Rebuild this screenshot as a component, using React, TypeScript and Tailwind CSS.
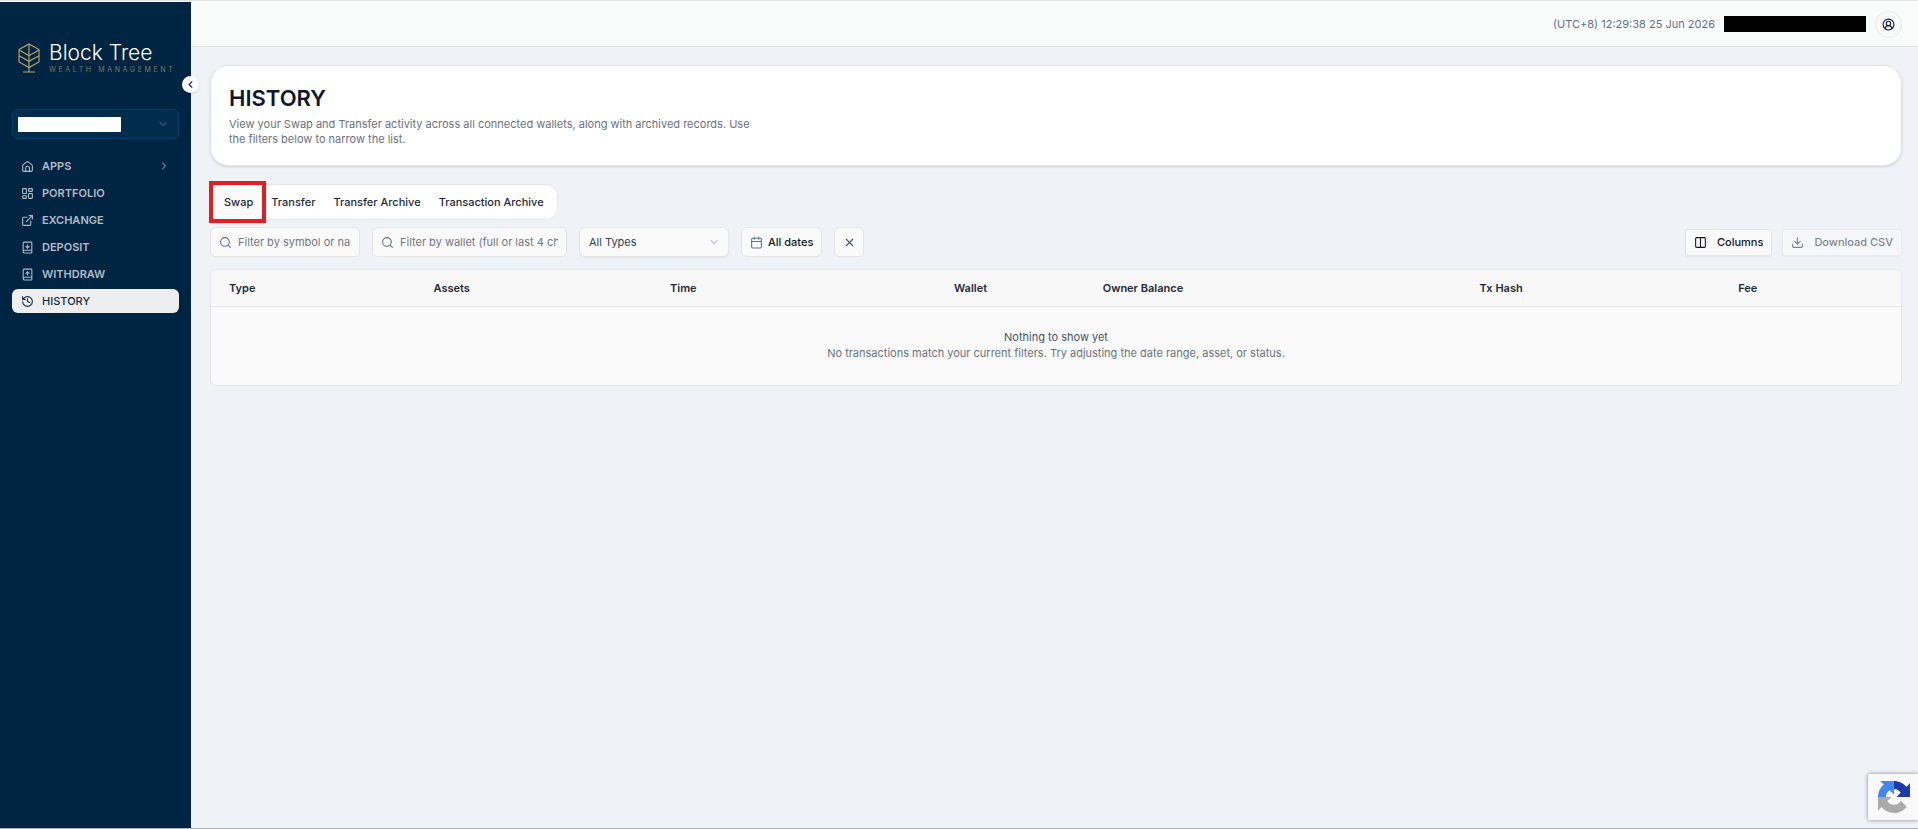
import React from "react";
import {
  BookDown,
  BookUp,
  Calendar,
  ChevronDown,
  ChevronLeft,
  ChevronRight,
  CircleUserRound,
  Columns2,
  Download,
  ExternalLink,
  History,
  LayoutDashboard,
  Search,
  X,
} from "lucide-react";

function HomeIcon({ className }: { className?: string }) {
  return (
    <svg
      viewBox="0 0 24 24"
      className={className}
      fill="none"
      stroke="currentColor"
      strokeWidth="2"
      strokeLinecap="round"
      strokeLinejoin="round"
      aria-hidden="true"
    >
      <path d="M3 10.500a2 2 0 0 1 .8-1.600l7-5.500a2 2 0 0 1 2.400 0l7 5.500a2 2 0 0 1 .8 1.600V19a2 2 0 0 1-2 2H5a2 2 0 0 1-2-2z" />
      <path d="M8.500 21v-6a3.500 3.500 0 0 1 7 0v6" />
    </svg>
  );
}

const navItems = [
  { label: "APPS", icon: HomeIcon, expandable: true },
  { label: "PORTFOLIO", icon: LayoutDashboard },
  { label: "EXCHANGE", icon: ExternalLink },
  { label: "DEPOSIT", icon: BookDown },
  { label: "WITHDRAW", icon: BookUp },
  { label: "HISTORY", icon: History, active: true },
];

const tabs = ["Swap", "Transfer", "Transfer Archive", "Transaction Archive"];

const columns = [
  { label: "Type", width: "w-[12.1%]" },
  { label: "Assets", width: "w-[14%]" },
  { label: "Time", width: "w-[16.8%]" },
  { label: "Wallet", width: "w-[8.8%]" },
  { label: "Owner Balance", width: "w-[22.3%]" },
  { label: "Tx Hash", width: "w-[15.3%]" },
  { label: "Fee", width: "w-[10.7%]" },
];

function Logo() {
  return (
    <a href="#" className="flex items-center gap-[9px]">
      <svg
        viewBox="0 0 22 30"
        className="h-[30px] w-[22px] shrink-0"
        fill="none"
        stroke="#c3a56b"
        strokeWidth="1.1"
        aria-hidden="true"
      >
        <path d="M11 1 21 6.500v12.500L11 24.500 1 19V6.500z" />
        <path d="M11 1v28M5 29h12" />
        <path d="M1 7l10 5.700L21 7M1 12.700l10 5.600 10-5.600" />
      </svg>
      <span className="flex flex-col">
        <span className="text-[21px] leading-6 font-light whitespace-nowrap text-white">Block Tree</span>
        <span className="text-[7px] leading-[10px] tracking-[0.375em] whitespace-nowrap text-[#7d7763]">
          WEALTH MANAGEMENT
        </span>
      </span>
    </a>
  );
}

function Sidebar() {
  return (
    <aside className="relative flex w-[191px] shrink-0 flex-col bg-[#002542] px-3">
      <div className="flex h-[107px] items-center px-[6px] pt-1">
        <Logo />
      </div>
      <button
        type="button"
        aria-label="Collapse sidebar"
        className="absolute top-[74px] -right-2 flex size-[17px] items-center justify-center rounded-full bg-white text-[#0f2c48] shadow"
      >
        <ChevronLeft className="size-[11px]" strokeWidth={2.5} />
      </button>
      <button
        type="button"
        aria-label="Account"
        className="flex h-[30px] items-center justify-between rounded-md border border-[#003f69] bg-[#002c4e] pr-[9px] pl-[5px]"
      >
        <span className="h-[15px] w-[103px] bg-white" />
        <ChevronDown className="size-3 text-[#5c7a93]" />
      </button>
      <nav className="mt-[15px] flex flex-col gap-[3px]">
        {navItems.map(({ label, icon: Icon, expandable, active }) => (
          <a
            key={label}
            href="#"
            className={
              active
                ? "flex h-6 items-center gap-2 rounded-md bg-[#eeeeee] px-[9px] text-[11px] font-medium text-[#0f2c48]"
                : "flex h-6 items-center gap-2 rounded-md px-[9px] text-[11px] font-semibold text-[#b0bcc7]"
            }
          >
            <Icon className="size-[13px]" />
            <span className="flex-1">{label}</span>
            {expandable && <ChevronRight className="size-3" />}
          </a>
        ))}
      </nav>
    </aside>
  );
}

function TopBar() {
  return (
    <header className="flex h-[45px] items-center justify-end gap-[9px] border-b border-[#e4e6e8] bg-[#fafcfb] pr-4">
      <time className="text-[11px] text-[#64708a]">(UTC+8) 12:29:38 25 Jun 2026</time>
      <span className="h-4 w-[142px] bg-black" />
      <button
        type="button"
        aria-label="Profile"
        className="flex size-[27px] items-center justify-center rounded-full border border-[#e5e5e5] bg-[#fafafa] text-[#0f172a]"
      >
        <CircleUserRound className="size-[13px]" />
      </button>
    </header>
  );
}

function SearchField({ label, className }: { label: string; className: string }) {
  return (
    <label
      className={`flex h-[30px] items-center gap-[6px] rounded-md border border-[#e5e5e5] bg-[#fafafa] px-2 ${className}`}
    >
      <Search className="size-[13px] shrink-0 text-[#64748b]" />
      <input
        type="text"
        aria-label={label}
        placeholder={label}
        className="w-full min-w-0 bg-transparent text-[11px] text-[#334155] outline-none placeholder:text-[#6f7785]"
      />
    </label>
  );
}

function Filters() {
  return (
    <div className="mt-[7px] flex items-center gap-3">
      <SearchField label="Filter by symbol or name" className="w-[150px]" />
      <SearchField label="Filter by wallet (full or last 4 characters)" className="w-[195px]" />
      <div className="relative w-[150px]">
        <select
          aria-label="Transaction type"
          className="block h-[30px] w-full appearance-none rounded-md border border-[#e5e5e5] bg-[#fafafa] px-[9px] text-[11px] text-[#334155] shadow-xs"
        >
          <option>All Types</option>
        </select>
        <ChevronDown className="pointer-events-none absolute top-[9px] right-[9px] size-3 text-[#94a3b8]" />
      </div>
      <button
        type="button"
        className="flex h-[30px] items-center gap-[5px] rounded-md border border-[#e5e5e5] bg-[#fafafa] px-2 text-[11px] font-medium text-[#0f172a]"
      >
        <Calendar className="size-[13px] text-[#64748b]" />
        All dates
      </button>
      <button
        type="button"
        aria-label="Clear filters"
        className="flex size-[30px] items-center justify-center rounded-md border border-[#e5e5e5] bg-[#fafafa] text-[#475569]"
      >
        <X className="size-[13px]" />
      </button>
      <div className="ml-auto flex gap-[10px]">
        <button
          type="button"
          className="flex h-[27px] items-center gap-[10px] rounded-[3px] border border-[#e5e5e5] bg-[#fafafa] px-2 text-[11px] font-medium text-[#0f172a] shadow-xs"
        >
          <Columns2 className="size-[13px]" />
          Columns
        </button>
        <button
          type="button"
          disabled
          className="flex h-[27px] items-center gap-[10px] rounded-[3px] border border-[#e5e5e5] bg-[#fafafa] px-2 text-[11px] font-medium text-[#0f172a] opacity-50 shadow-xs"
        >
          <Download className="size-[13px]" />
          Download CSV
        </button>
      </div>
    </div>
  );
}

function Tabs() {
  return (
    <div className="relative mt-[18px] w-fit">
      <div role="tablist" className="flex h-9 items-center gap-1 rounded-xl border border-[#e5e7eb] bg-white px-[6px]">
        {tabs.map((tab, i) => (
          <button
            key={tab}
            type="button"
            role="tab"
            aria-selected={i === 0}
            className={
              i === 0
                ? "h-6 rounded-md bg-[#fafafa] px-[7px] text-[11px] font-medium text-[#1e293b] shadow-xs"
                : "h-6 rounded-md px-[7px] text-[11px] font-medium text-[#1e293b]"
            }
          >
            {tab}
          </button>
        ))}
      </div>
      <span className="pointer-events-none absolute -top-[3px] -left-px h-[42px] w-[57px] border-4 border-[#e81c1f]" />
    </div>
  );
}

function HistoryTable() {
  return (
    <div className="mt-3 overflow-hidden rounded-md border border-[#e5e5e5] bg-[#fafafa]">
      <table className="w-full table-fixed text-[11px]">
        <thead>
          <tr className="h-9 border-b border-[#e5e5e5] bg-[#f8f8f8]">
            {columns.map(({ label, width }) => (
              <th key={label} scope="col" className={`${width} px-[18px] text-left font-semibold text-[#1e293b]`}>
                {label}
              </th>
            ))}
          </tr>
        </thead>
        <tbody>
          <tr>
            <td colSpan={columns.length} className="pt-[22px] pb-6 text-center leading-4">
              <p className="text-[#475569]">Nothing to show yet</p>
              <p className="text-[#6b7280]">
                No transactions match your current filters. Try adjusting the date range, asset, or status.
              </p>
            </td>
          </tr>
        </tbody>
      </table>
    </div>
  );
}

function RecaptchaBadge() {
  return (
    <div className="fixed right-0 bottom-[9px] flex h-[46px] w-[50px] items-center rounded-l-[2px] bg-[#f9f9f9] pl-[10px] shadow-[0_0_4px_#808080]">
      <svg viewBox="0 0 64 64" className="size-8" aria-label="reCAPTCHA" role="img">
        <path
          fill="#1c3aa9"
          d="M64 31.955a33 33 0 0 0-.037-1.380V4.640l-7.170 7.170C50.925 4.628 41.996.046 31.996.046v15.940a15.900 15.900 0 0 1 13.470 7.550L37.010 32z"
        />
        <path
          fill="#4285f4"
          d="M31.862.009a33 33 0 0 0-1.380.037H4.547l7.170 7.170C4.535 13.084-.047 22.013-.047 32.013H15.900a15.900 15.900 0 0 1 7.543-13.470l8.464 8.464z"
        />
        <path
          fill="#ababab"
          d="M.001 32.013c.001.460.012.920.033 1.380v25.935l7.170-7.170c5.868 7.182 14.797 11.764 24.797 11.764 10.407 0 19.652-4.963 25.484-12.649L45.732 39.520a15.900 15.900 0 0 1-13.720 7.920 15.900 15.900 0 0 1-13.480-7.550L27 31.980z"
        />
      </svg>
    </div>
  );
}

export default function App() {
  return (
    <div className="flex min-h-screen border-t border-b border-t-[#dfe1e3] border-b-[#a9b0ba] bg-white pt-px font-['Inter',sans-serif]">
      <Sidebar />
      <div className="flex min-w-0 flex-1 flex-col bg-[#eff3f8]">
        <TopBar />
        <main className="pt-[18px] pr-4 pl-[19px]">
          <section className="rounded-[18px] border border-[#e1e4e8] bg-white px-[18px] py-[18px] shadow-sm">
            <h1 className="text-[22px] leading-[29px] font-semibold text-[#0f172a]">HISTORY</h1>
            <p className="mt-1 max-w-[532px] text-[11px] leading-[15px] text-[#6b7280]">
              View your Swap and Transfer activity across all connected wallets, along with archived records. Use the
              filters below to narrow the list.
            </p>
          </section>
          <Tabs />
          <Filters />
          <HistoryTable />
        </main>
      </div>
      <RecaptchaBadge />
    </div>
  );
}
